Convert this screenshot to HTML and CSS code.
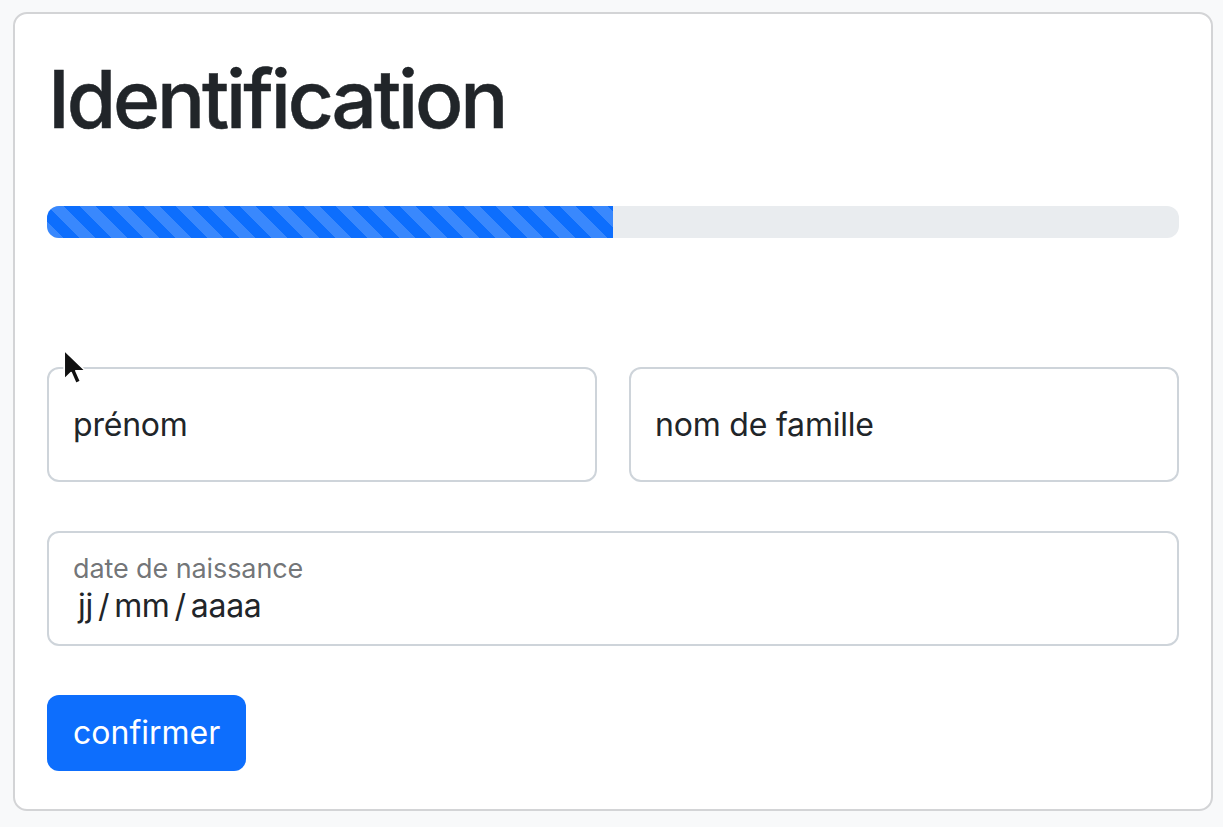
FILE: index.html
```html
<!DOCTYPE html>
<html lang="fr">
<head>
<meta charset="utf-8">
<title>Identification</title>
<link rel="stylesheet" href="styles.css">
</head>
<body>
<div class="card">
  <h1 class="title">Identification</h1>
  <div class="progress"><div class="progress-bar" style="width: 50%"></div></div>
  <form class="form">
    <div class="row">
      <div class="field"><span class="placeholder">prénom</span></div>
      <div class="field"><span class="placeholder">nom de famille</span></div>
    </div>
    <div class="field field-date">
      <span class="small-label">date de naissance</span>
      <span class="date-value">jj<span class="sep">/</span>mm<span class="sep">/</span>aaaa</span>
    </div>
    <div class="actions"><button type="button" class="btn">confirmer</button></div>
  </form>
  <svg class="cursor" width="26" height="39" viewBox="0 0 12 18" aria-hidden="true">
    <path d="M1 1 L1 14.5 L4.2 11.4 L6.4 16.4 L8.6 15.4 L6.4 10.5 L10.8 10.5 Z" fill="#111" stroke="#fff" stroke-width="0.8" stroke-linejoin="round"/>
  </svg>
</div>
</body>
</html>
```
FILE: styles.css
```css
* { box-sizing: border-box; }
html, body { margin: 0; padding: 0; }
body {
  background: #f8f9fa;
  font-family: Inter, "Noto Sans", "Liberation Sans", sans-serif;
  color: #212529;
  padding: 12px 11px 0 13px;
}
.card {
  position: relative;
  width: 1200px;
  height: 799px;
  background: #fff;
  border: 2px solid #d3d4d6;
  border-radius: 14px;
  padding: 32px 32px;
}
.title {
  margin: 5px 0 59px 1px;
  font-size: 80px;
  font-weight: 500;
  line-height: 96px;
  letter-spacing: -3.1px;
  -webkit-text-stroke: 0.5px #212529;
  color: #212529;
}
.progress {
  height: 32px;
  background: #e9ecef;
  border-radius: 12px;
  overflow: hidden;
  display: flex;
}
.progress-bar {
  height: 100%;
  background-color: #0d6efd;
  background-image: linear-gradient(45deg, rgba(255,255,255,.18) 25%, transparent 25%, transparent 50%, rgba(255,255,255,.18) 50%, rgba(255,255,255,.18) 75%, transparent 75%, transparent);
  background-size: 32px 32px;
}
.form {
  margin-top: 129px;
  display: flex;
  flex-direction: column;
  gap: 49px;
}
.row {
  display: flex;
  gap: 32px;
}
.row .field { flex: 1; }
.field {
  height: 115px;
  border: 2px solid #ced4da;
  border-radius: 12px;
  padding: 0 24px;
  display: flex;
  flex-direction: column;
  justify-content: center;
}
.placeholder {
  font-size: 32px;
  line-height: 48px;
  letter-spacing: -0.2px;
  color: #212529;
}
.field-date { justify-content: flex-start; padding-top: 19px; }
.small-label {
  font-size: 27px;
  line-height: 34px;
  color: rgba(33,37,41,.65);
  letter-spacing: -0.1px;
}
.date-value {
  font-size: 32px;
  line-height: 40px;
  padding-left: 5px;
  letter-spacing: -0.3px;
  color: #212529;
}
.sep { margin: 0 5px; }
.actions { display: flex; }
.btn {
  height: 76px;
  padding: 0 26px;
  background: #0d6efd;
  color: #fff;
  border: 0;
  border-radius: 12px;
  font-family: inherit;
  font-size: 32px;
  letter-spacing: 0;
  line-height: 48px;
}
.cursor {
  position: absolute;
  left: 47px;
  top: 334px;
}
```
